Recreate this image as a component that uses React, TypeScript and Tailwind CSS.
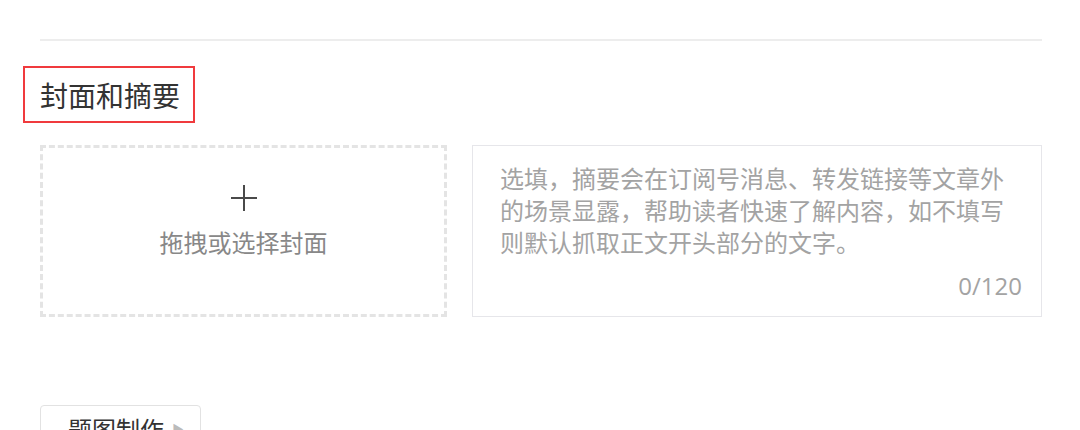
export default function App() {
  const font = { fontFamily: '"Noto Sans CJK SC", "Noto Sans", sans-serif' };

  return (
    <div
      className="h-[430px] w-[1080px] overflow-hidden bg-white pl-[40px] pr-[38px] pt-[39px]"
      style={font}
    >
      <div className="h-[2px] w-full bg-[#ededed]" />

      <div className="mt-[25px] -ml-[17px] inline-flex h-[57px] items-center border-2 border-[#f03a3d] pl-[15px] pr-[13px]">
        <h3 className="text-[28px] leading-none text-[#333]">封面和摘要</h3>
      </div>

      <div className="mt-[22px] flex gap-[25px]">
        <button className="flex h-[172px] w-[407px] shrink-0 flex-col items-center border-[3px] border-dashed border-[#e4e4e4]">
          <svg width="28" height="28" viewBox="0 0 28 28" className="mt-[36px]">
            <path d="M14 1v26M1 14h26" stroke="#4a4a4a" strokeWidth="2" fill="none" />
          </svg>
          <span className="mt-[18px] text-[24px] leading-none text-[#888]">拖拽或选择封面</span>
        </button>

        <div className="flex h-[172px] flex-1 flex-col border border-[#e6e6ea] pb-[18px] pl-[27px] pr-[19px] pt-[16px]">
          <p className="text-[24px] leading-[32px] text-[#a3a3a3]">
            选填，摘要会在订阅号消息、转发链接等文章外的场景显露，帮助读者快速了解内容，如不填写则默认抓取正文开头部分的文字。
          </p>
          <span className="mt-auto self-end font-['Open_Sans',sans-serif] text-[24px] leading-none text-[#a3a3a3]">
            0/120
          </span>
        </div>
      </div>

      <div className="mt-[88px] flex h-[48px] w-[161px] items-center gap-[8px] rounded-[4px] border border-[#e2e2e2] pl-[27px]">
        <span className="text-[24px] leading-none text-[#333]">题图制作</span>
        <span className="text-[12px] text-[#bbb]">▶</span>
      </div>
    </div>
  );
}
